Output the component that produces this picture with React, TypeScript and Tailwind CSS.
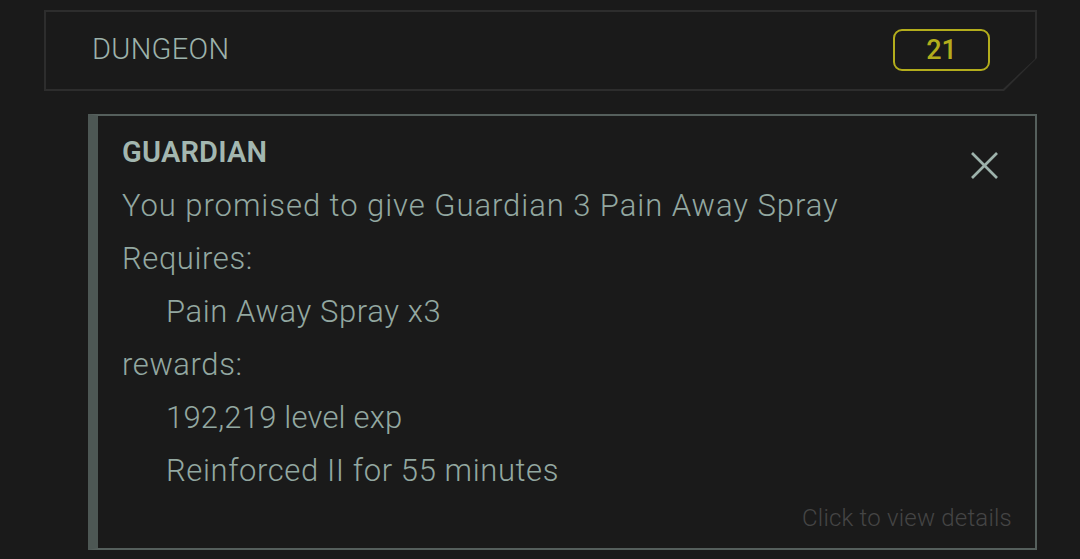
import React from "react";

const font = { fontFamily: "Roboto, 'Noto Sans', sans-serif" };

export default function App() {
  return (
    <div className="w-[1080px] h-[559px] bg-[#1a1a1a] overflow-hidden pt-[10px]" style={font}>
      {/* Header with chamfered corner */}
      <div
        className="ml-[44px] w-[993px] h-[81px] bg-[#2d2d2d] p-[2px]"
        style={{ clipPath: "polygon(0 0, 100% 0, 100% 48px, calc(100% - 33px) 100%, 0 100%)" }}
      >
        <div
          className="w-full h-full bg-[#1a1a1a] flex items-center pl-[46px] pr-[45px] pb-[3px]"
          style={{ clipPath: "polygon(0 0, 100% 0, 100% 47px, calc(100% - 32px) 100%, 0 100%)" }}
        >
          <span className="text-[29px] font-light tracking-[0.3px] text-[#9db2ab] leading-none">DUNGEON</span>
          <div className="ml-auto mt-[2px] w-[97px] h-[42px] rounded-[9px] border-2 border-[#b3ad1c] flex items-center justify-center">
            <span className="text-[27px] font-medium text-[#b3ad1c] leading-none">21</span>
          </div>
        </div>
      </div>

      {/* Quest card */}
      <div className="relative ml-[88px] mt-[23px] w-[949px] h-[436px] border-l-[10px] border-l-[#4d5754] border-y-2 border-r-2 border-[#555f5c] pl-[24px] pt-[10px]">
        <div className="text-[31px] leading-[53px] text-[#93a8a1] font-light tracking-[0.6px]">
          <div className="font-semibold text-[29px] text-[#a3b7b0] tracking-[0.2px]">GUARDIAN</div>
          <div className="tracking-[0.95px]">You promised to give Guardian 3 Pain Away Spray</div>
          <div>Requires:</div>
          <div className="pl-[44px]">Pain Away Spray x3</div>
          <div>rewards:</div>
          <div className="pl-[44px] tracking-[0.2px]">192,219 level exp</div>
          <div className="pl-[44px]">Reinforced II for 55 minutes</div>
        </div>
        <div className="absolute right-[23px] bottom-[18px] text-[24px] font-light tracking-[0.2px] text-[#454545] leading-none">
          Click to view details
        </div>
        <svg
          className="absolute right-[37px] top-[36px]"
          width="27"
          height="27"
          viewBox="0 0 27 27"
          fill="none"
          stroke="#9db2ab"
          strokeWidth="2.6"
        >
          <line x1="1" y1="1" x2="26" y2="26" />
          <line x1="26" y1="1" x2="1" y2="26" />
        </svg>
      </div>
    </div>
  );
}
